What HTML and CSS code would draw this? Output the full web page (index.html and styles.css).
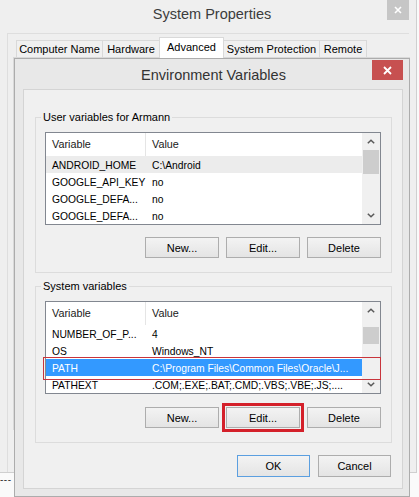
FILE: index.html
```html
<!DOCTYPE html>
<html>
<head>
<meta charset="utf-8">
<title>Environment Variables</title>
<link rel="stylesheet" href="styles.css">
</head>
<body>
<div class="sys-window">
  <div class="sys-titlebar">
    <span class="sys-title">System Properties</span>
    <span class="sys-close"><svg width="8" height="8" viewBox="0 0 8 8"><path d="M1 1L7 7M7 1L1 7" stroke="#fff" stroke-width="1.6" fill="none"/></svg></span>
  </div>
  <div class="sys-client">
    <div class="tabs">
      <div class="tab w-cn">Computer Name</div>
      <div class="tab w-hw">Hardware</div>
      <div class="tab active w-adv">Advanced</div>
      <div class="tab w-sp">System Protection</div>
      <div class="tab w-rm">Remote</div>
    </div>
    <div class="tab-panel"></div>
  </div>
</div>
<div class="below"><span class="dashes">---</span></div>

<div class="env-dialog">
  <div class="env-titlebar">
    <span class="env-title">Environment Variables</span>
    <span class="env-close"><svg width="9" height="9" viewBox="0 0 9 9"><path d="M1 1L8 8M8 1L1 8" stroke="#fff" stroke-width="1.8" fill="none"/></svg></span>
  </div>
  <div class="env-client">
    <fieldset class="group">
      <legend>User variables for Armann</legend>
      <div class="listview">
        <div class="lv-body">
          <div class="lv-header"><span class="c1">Variable</span><span class="c2">Value</span></div>
          <div class="lv-row hot"><span class="c1">ANDROID_HOME</span><span class="c2">C:\Android</span></div>
          <div class="lv-row"><span class="c1">GOOGLE_API_KEY</span><span class="c2">no</span></div>
          <div class="lv-row"><span class="c1">GOOGLE_DEFA...</span><span class="c2">no</span></div>
          <div class="lv-row"><span class="c1">GOOGLE_DEFA...</span><span class="c2">no</span></div>
        </div>
        <div class="scrollbar">
          <div class="sb-btn"><svg width="8" height="5" viewBox="0 0 8 5"><path d="M0.8 4.3L4 1.2L7.2 4.3" stroke="#5a5a5a" stroke-width="1.5" fill="none"/></svg></div>
          <div class="sb-track"><div class="sb-thumb user-thumb"></div></div>
          <div class="sb-btn"><svg width="8" height="5" viewBox="0 0 8 5"><path d="M0.8 0.7L4 3.8L7.2 0.7" stroke="#5a5a5a" stroke-width="1.5" fill="none"/></svg></div>
        </div>
      </div>
      <div class="btn-row">
        <button class="btn">New...</button>
        <button class="btn">Edit...</button>
        <button class="btn">Delete</button>
      </div>
    </fieldset>

    <fieldset class="group second">
      <legend>System variables</legend>
      <div class="listview">
        <div class="lv-body">
          <div class="lv-header"><span class="c1">Variable</span><span class="c2">Value</span></div>
          <div class="lv-row"><span class="c1">NUMBER_OF_P...</span><span class="c2">4</span></div>
          <div class="lv-row"><span class="c1">OS</span><span class="c2">Windows_NT</span></div>
          <div class="lv-row selected"><span class="c1">PATH</span><span class="c2">C:\Program Files\Common Files\Oracle\J...</span></div>
          <div class="lv-row"><span class="c1">PATHEXT</span><span class="c2">.COM;.EXE;.BAT;.CMD;.VBS;.VBE;.JS;....</span></div>
        </div>
        <div class="scrollbar">
          <div class="sb-btn"><svg width="8" height="5" viewBox="0 0 8 5"><path d="M0.8 4.3L4 1.2L7.2 4.3" stroke="#5a5a5a" stroke-width="1.5" fill="none"/></svg></div>
          <div class="sb-track"><div class="sb-thumb sys-thumb"></div></div>
          <div class="sb-btn"><svg width="8" height="5" viewBox="0 0 8 5"><path d="M0.8 0.7L4 3.8L7.2 0.7" stroke="#5a5a5a" stroke-width="1.5" fill="none"/></svg></div>
        </div>
        <div class="row-mark"></div>
      </div>
      <div class="btn-row">
        <button class="btn">New...</button>
        <button class="btn marked">Edit...</button>
        <button class="btn">Delete</button>
      </div>
    </fieldset>

    <div class="dialog-buttons">
      <button class="btn default">OK</button>
      <button class="btn">Cancel</button>
    </div>
  </div>
</div>
</body>
</html>
```

FILE: styles.css
```css
html, body {
  margin: 0;
  padding: 0;
}
body {
  width: 419px;
  height: 497px;
  overflow: hidden;
  position: relative;
  background: #fafafa;
  font-family: "Liberation Sans", Arial, sans-serif;
  font-size: 11px;
  color: #000;
}

/* ---------- System Properties window (behind) ---------- */
.sys-window {
  width: 417px;
  height: 473px;
  box-sizing: border-box;
  border-right: 1px solid #cfcfcf;
  border-bottom: 1px solid #cfcfcf;
  background: #efefef;
  display: flex;
  flex-direction: column;
}
.sys-titlebar {
  height: 33px;
  flex: none;
  display: grid;
  grid-template-columns: 1fr auto 1fr;
  align-items: start;
}
.sys-title {
  grid-column: 2;
  font-size: 14.5px;
  line-height: 16px;
  margin-top: 6px;
  padding-left: 8px;
  color: #3c3c3c;
}
.sys-close {
  grid-column: 3;
  justify-self: end;
  width: 22px;
  height: 20px;
  margin-right: 7px;
  background: #c6c6c6;
  display: flex;
  align-items: center;
  justify-content: center;
}
.sys-client {
  flex: 1;
  margin: 0 7px 0 7px;
  border-left: 1px solid #dedede;
  border-top: 1px solid #dedede;
  padding-top: 3px;
  display: flex;
  flex-direction: column;
}
.tabs {
  display: flex;
  align-items: flex-end;
  height: 20px;
  margin-left: 8px;
}
.tab {
  box-sizing: border-box;
  height: 17px;
  border: 1px solid #d9d9d9;
  border-bottom: none;
  margin-right: -1px;
  background: #f0f0f0;
  text-align: center;
  line-height: 16px;
  white-space: nowrap;
  color: #000;
}
.tab.active {
  height: 21px;
  background: #fff;
  margin-bottom: -1px;
  position: relative;
  z-index: 1;
  line-height: 19px;
}
.w-cn { width: 87px; }
.w-hw { width: 58px; }
.w-adv { width: 65px; }
.w-sp { width: 97px; }
.w-rm { width: 48px; }
.tab-panel {
  margin-left: 5px;
  width: 397px;
  height: 373px;
  box-sizing: border-box;
  border: 1px solid #d9d9d9;
  background: #fff;
}
.below {
  height: 24px;
  line-height: 12px;
}
.dashes {
  font-size: 10px;
  letter-spacing: 0.5px;
  color: #333;
}

/* ---------- Environment Variables dialog ---------- */
.env-dialog {
  position: absolute;
  left: 14px;
  top: 58px;
  width: 396px;
  height: 439px;
  box-sizing: border-box;
  border: 1px solid #acacac;
  background: #e8e8e8;
  display: flex;
  flex-direction: column;
}
.env-titlebar {
  height: 30px;
  flex: none;
  display: grid;
  grid-template-columns: 1fr auto 1fr;
  align-items: start;
}
.env-title {
  grid-column: 2;
  font-size: 14.5px;
  line-height: 16px;
  margin-top: 8px;
  padding-left: 3px;
  color: #333;
}
.env-close {
  grid-column: 3;
  justify-self: end;
  width: 31px;
  height: 20px;
  margin-top: 1px;
  margin-right: 6px;
  background: #c75050;
  display: flex;
  align-items: center;
  justify-content: center;
}
.env-client {
  flex: 1;
  margin: 0 6px 7px 8px;
  border: 1px solid #d4d4d4;
  background: #f0f0f0;
  padding: 20px 10px 11px 11px;
  display: flex;
  flex-direction: column;
}

.group {
  margin: 0;
  border: 1px solid #dcdcdc;
  padding: 0 10px 14px 9px;
}
.group.second {
  margin-top: 6px;
}
.group legend {
  padding: 0 2px;
  margin-left: -4px;
  line-height: 14px;
  color: #000;
}

.listview {
  position: relative;
  margin-top: 8px;
  height: 93px;
  box-sizing: border-box;
  border: 1px solid #828790;
  background: #fff;
  display: flex;
  font-size: 10.3px;
}
.lv-body {
  flex: 1;
  overflow: hidden;
}
.lv-header {
  height: 23px;
  display: flex;
  line-height: 23px;
  background: #fff;
  color: #1a1a1a;
  font-size: 10.8px;
}
.lv-header .c1 {
  border-right: 1px solid #e5e5e5;
}
.c1 {
  box-sizing: border-box;
  width: 100px;
  flex: none;
  padding-left: 6px;
  white-space: nowrap;
}
.c2 {
  flex: 1;
  min-width: 0;
  padding-left: 6px;
  white-space: nowrap;
  overflow: hidden;
}
.lv-row {
  display: flex;
  height: 17px;
  box-sizing: border-box;
  padding-top: 2px;
  line-height: 15px;
}
.lv-row.hot {
  background: #ececec;
}
.lv-row.selected {
  background: #3399ff;
  color: #fff;
}

.scrollbar {
  width: 18px;
  flex: none;
  display: flex;
  flex-direction: column;
  background: #f0f0f0;
}
.sb-btn {
  height: 17px;
  flex: none;
  display: flex;
  align-items: center;
  justify-content: center;
}
.sb-track {
  flex: 1;
}
.sb-thumb {
  margin: 0 1px;
  background: #cdcdcd;
}
.user-thumb {
  height: 24px;
}
.sys-thumb {
  margin-top: 8px;
  height: 17px;
}
.row-mark {
  position: absolute;
  left: -3px;
  top: 55px;
  width: 338px;
  height: 23px;
  box-sizing: border-box;
  border: 1px solid #c8343c;
}

.btn-row {
  margin-top: 12px;
  display: flex;
  justify-content: flex-end;
  gap: 7px;
}
.group.second .btn-row {
  margin-top: 13px;
}
.btn {
  width: 74px;
  height: 21px;
  box-sizing: border-box;
  border: 1px solid #adadad;
  background: linear-gradient(#f3f3f3, #e4e4e4);
  font-family: "Liberation Sans", Arial, sans-serif;
  font-size: 11px;
  color: #000;
  padding: 0;
  margin: 0;
}
.btn.marked {
  outline: 3px solid #d4202a;
  outline-offset: 1px;
}
.dialog-buttons {
  margin-top: 12px;
  margin-right: 1px;
  display: flex;
  justify-content: flex-end;
  gap: 8px;
}
.dialog-buttons .btn {
  width: 73px;
  height: 22px;
}
.btn.default {
  border-color: #5b9fe0;
}
```
